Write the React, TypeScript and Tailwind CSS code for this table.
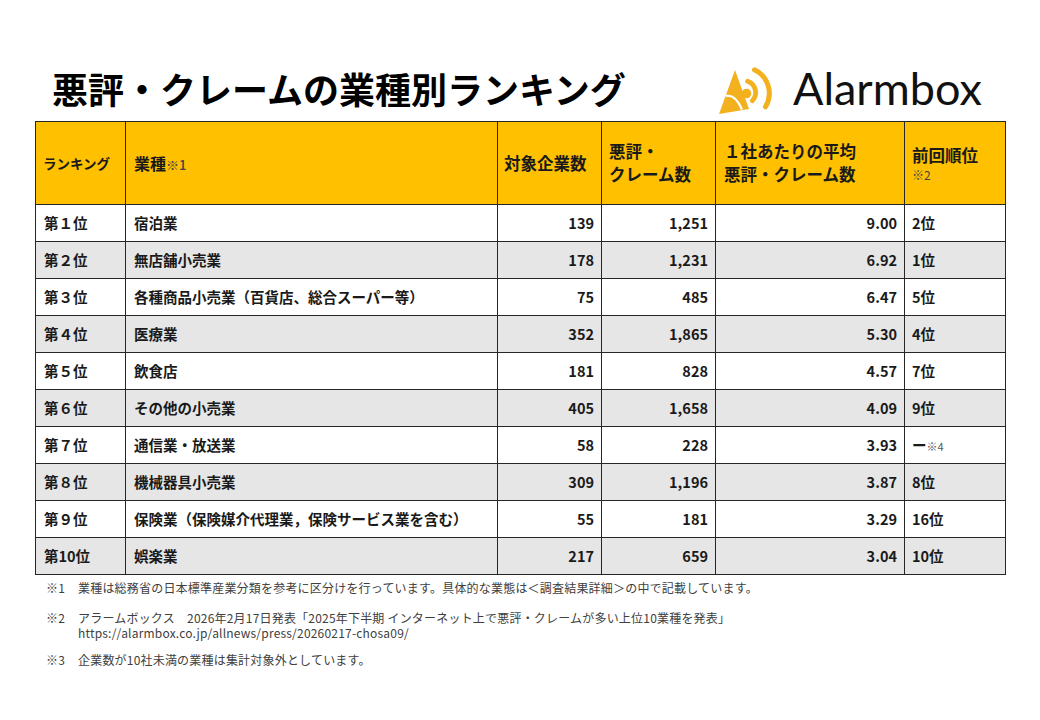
import React from "react";

type Row = { rank: React.ReactNode; name: string; n: string; c: string; avg: string; prev: React.ReactNode };

const rows: Row[] = [
  { rank: "第１位", name: "宿泊業", n: "139", c: "1,251", avg: "9.00", prev: "2位" },
  { rank: "第２位", name: "無店舗小売業", n: "178", c: "1,231", avg: "6.92", prev: "1位" },
  { rank: "第３位", name: "各種商品小売業（百貨店、総合スーパー等）", n: "75", c: "485", avg: "6.47", prev: "5位" },
  { rank: "第４位", name: "医療業", n: "352", c: "1,865", avg: "5.30", prev: "4位" },
  { rank: "第５位", name: "飲食店", n: "181", c: "828", avg: "4.57", prev: "7位" },
  { rank: "第６位", name: "その他の小売業", n: "405", c: "1,658", avg: "4.09", prev: "9位" },
  {
    rank: "第７位",
    name: "通信業・放送業",
    n: "58",
    c: "228",
    avg: "3.93",
    prev: (
      <span>
        ー<span className="text-[11px] font-normal text-[#555]">※4</span>
      </span>
    ),
  },
  { rank: "第８位", name: "機械器具小売業", n: "309", c: "1,196", avg: "3.87", prev: "8位" },
  { rank: "第９位", name: "保険業（保険媒介代理業，保険サービス業を含む）", n: "55", c: "181", avg: "3.29", prev: "16位" },
  { rank: "第10位", name: "娯楽業", n: "217", c: "659", avg: "3.04", prev: "10位" },
];

function Logo() {
  const c = "#F3B01F";
  return (
    <svg width="58" height="48" viewBox="0 0 58 48" className="block shrink-0 mt-[5px]">
      <path d="M16 3 L0 47 L30 42 Z" fill={c} />
      <path d="M6.5 29 Q16 26.5 23 42.5" stroke="#ffffff" strokeWidth="2.2" fill="none" />
      <circle cx="27.5" cy="26.5" r="4.8" fill={c} />
      <path d="M28.6 14.2 A12 12 0 0 1 33.4 33.7" stroke={c} strokeWidth="4.8" fill="none" strokeLinecap="round" />
      <path d="M35.5 2.8 A26 26 0 0 1 46.5 39.8" stroke={c} strokeWidth="5" fill="none" strokeLinecap="round" />
    </svg>
  );
}

export default function App() {
  const cell = "border border-[#262626] align-middle";
  return (
    <div className="w-[1040px] h-[720px] bg-white text-[#1a1a1a] font-['Noto_Sans_CJK_JP',sans-serif] overflow-hidden">
      <div className="flex pt-[62px] h-[118px]">
        <div className="w-[719px] pl-[52px] mt-[8px]">
          <div className="text-[36px] leading-[36px] font-bold text-black whitespace-nowrap">
            悪評・クレームの業種別ランキング
          </div>
        </div>
        <Logo />
        <div className="ml-[16px] mt-[4px] text-[45px] leading-[45px] font-['Lato',sans-serif] text-[#111] whitespace-nowrap">
          Alarmbox
        </div>
      </div>

      <table className="ml-[35px] mt-[3px] w-[970px] table-fixed border-collapse">
        <colgroup>
          <col className="w-[90px]" />
          <col className="w-[372px]" />
          <col className="w-[104px]" />
          <col className="w-[114px]" />
          <col className="w-[189px]" />
          <col className="w-[101px]" />
        </colgroup>
        <thead>
          <tr className="h-[83px] bg-[#FFC000] font-bold">
            <th className={`${cell} text-left px-[7px] text-[13.5px] font-bold`}>ランキング</th>
            <th className={`${cell} text-left px-[8px] text-[16px] font-bold`}>
              業種<span className="text-[13px] font-medium text-[#454545]">※1</span>
            </th>
            <th className={`${cell} text-left px-[6px] text-[16.5px] font-bold whitespace-nowrap`}>対象企業数</th>
            <th className={`${cell} text-left px-[7px] text-[16.5px] leading-[23px] font-bold`}>
              <div>悪評・</div>
              <div>クレーム数</div>
            </th>
            <th className={`${cell} text-left px-[8px] text-[16.5px] leading-[23px] font-bold`}>
              <div>１社あたりの平均</div>
              <div>悪評・クレーム数</div>
            </th>
            <th className={`${cell} text-left px-[7px] font-bold`}>
              <div className="text-[16.5px] leading-[23px]">前回順位</div>
              <div className="text-[12px] leading-[15px] font-normal text-[#454545]">※2</div>
            </th>
          </tr>
        </thead>
        <tbody>
          {rows.map((r, i) => (
            <tr key={i} className={`h-[37px] text-[14.5px] font-bold ${i % 2 === 1 ? "bg-[#E6E6E6]" : "bg-white"}`}>
              <td className={`${cell} px-[8px] whitespace-nowrap`}>{r.rank}</td>
              <td className={`${cell} px-[8px] whitespace-nowrap`}>{r.name}</td>
              <td className={`${cell} px-[7px] text-right`}>{r.n}</td>
              <td className={`${cell} px-[7px] text-right`}>{r.c}</td>
              <td className={`${cell} px-[7px] text-right`}>{r.avg}</td>
              <td className={`${cell} px-[7px]`}>{r.prev}</td>
            </tr>
          ))}
        </tbody>
      </table>

      <div className="pl-[46px] text-[12px] text-[#404040] tracking-[0.2px]">
        <div className="flex mt-[4px] leading-[18px]">
          <div className="w-[32px] shrink-0">※1</div>
          <div>業種は総務省の日本標準産業分類を参考に区分けを行っています。具体的な業態は＜調査結果詳細＞の中で記載しています。</div>
        </div>
        <div className="flex mt-[13px] leading-[15px]">
          <div className="w-[32px] shrink-0">※2</div>
          <div>
            <div>アラームボックス　2026年2月17日発表「2025年下半期 インターネット上で悪評・クレームが多い上位10業種を発表」</div>
            <div>https://alarmbox.co.jp/allnews/press/20260217-chosa09/</div>
          </div>
        </div>
        <div className="flex mt-[12px] leading-[15px]">
          <div className="w-[32px] shrink-0">※3</div>
          <div>企業数が10社未満の業種は集計対象外としています。</div>
        </div>
      </div>
    </div>
  );
}
